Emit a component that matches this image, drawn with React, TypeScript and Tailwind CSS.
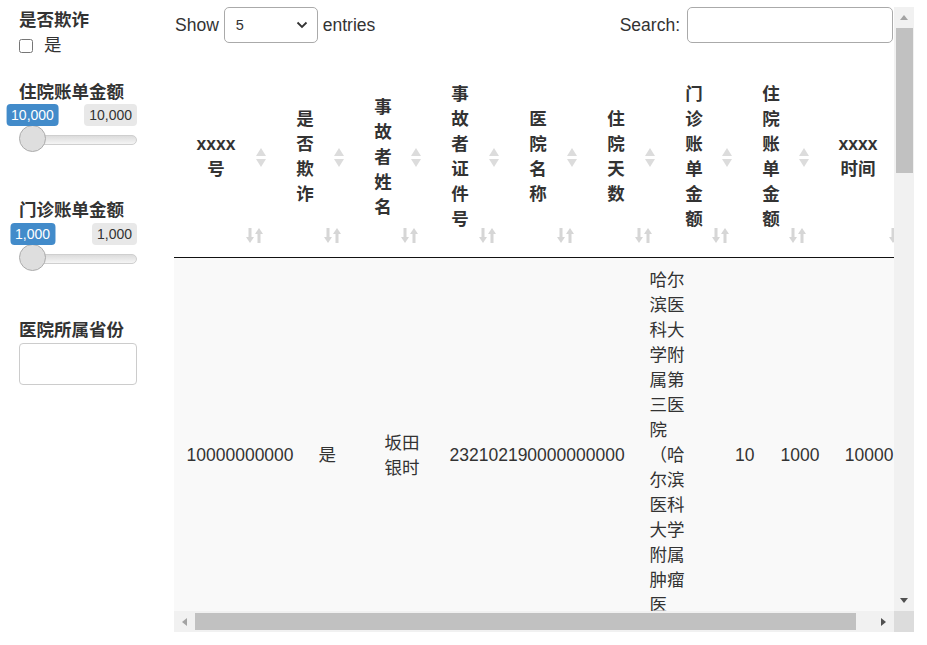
import React from "react";

const headCols = [
  { label: "xxxx号", w: "w-[99px]", tw: "w-[50px]" },
  { label: "是否欺诈", w: "w-[78px]", tw: "w-[30px]" },
  { label: "事故者姓名", w: "w-[77px]", tw: "w-[30px]" },
  { label: "事故者证件号", w: "w-[78px]", tw: "w-[30px]" },
  { label: "医院名称", w: "w-[78px]", tw: "w-[30px]" },
  { label: "住院天数", w: "w-[78px]", tw: "w-[30px]" },
  { label: "门诊账单金额", w: "w-[77px]", tw: "w-[30px]" },
  { label: "住院账单金额", w: "w-[77px]", tw: "w-[30px]" },
  { label: "xxxx时间", w: "w-[100px]", tw: "w-[50px]" },
];

const row = [
  { v: "10000000000", w: "w-[132px]", cls: "whitespace-nowrap" },
  { v: "是", w: "w-[66px]", cls: "" },
  { v: "坂田银时", w: "w-[65px]", cls: "" },
  { v: "232102190000000000", w: "w-[200px]", cls: "whitespace-nowrap" },
  { v: "哈尔滨医科大学附属第三医院（哈尔滨医科大学附属肿瘤医院）", w: "w-[62px]", cls: "" },
  { v: "10", w: "w-[68px]", cls: "text-right whitespace-nowrap" },
  { v: "1000", w: "w-[65px]", cls: "text-right whitespace-nowrap" },
  { v: "10000", w: "w-[74px]", cls: "text-right whitespace-nowrap" },
  { v: "2019-01-01", w: "w-[120px]", cls: "whitespace-nowrap" },
];

function SortBoth() {
  return (
    <svg width="10" height="19" viewBox="0 0 10 19" className="block">
      <polygon points="0,8 5,0 10,8" fill="#dcdcdc" />
      <polygon points="0,11 10,11 5,19" fill="#dcdcdc" />
    </svg>
  );
}

function SortGlyph() {
  return (
    <svg width="17" height="15" viewBox="0 0 17 15" className="block">
      <rect x="2.5" y="0" width="3" height="10" fill="#d6d6d6" />
      <polygon points="0,9 8,9 4,15" fill="#d6d6d6" />
      <polygon points="9,6 17,6 13,0" fill="#d6d6d6" />
      <rect x="11.5" y="5" width="3" height="10" fill="#d6d6d6" />
    </svg>
  );
}

function Slider({ value }: { value: string }) {
  return (
    <div className="relative h-[70px] w-[118px]">
      <div className="absolute left-[1px] right-0 top-[31px] h-[10px] rounded-full border border-[#cfcfcf] bg-gradient-to-b from-[#dcdcdc] to-[#f5f5f5]" />
      <div className="absolute left-0 top-[21px] w-[27px] h-[27px] rounded-full border border-[#ababab] bg-[#dedede]" />
      <div className="absolute left-[13.5px] top-0 -translate-x-1/2 h-[22px] px-[5px] rounded-[4px] bg-[#428bca] text-white text-[14px] leading-[22px] whitespace-nowrap">
        {value}
      </div>
      <div className="absolute right-0 top-0 h-[22px] px-[5px] rounded-[4px] bg-[#e8e8e8] text-[#333] text-[14px] leading-[22px] whitespace-nowrap">
        {value}
      </div>
    </div>
  );
}

function Sidebar() {
  return (
    <aside className="w-[174px] shrink-0 pl-[19px] pt-[8px]">
      <div className="w-[118px]">
        <div className="font-bold">是否欺诈</div>
        <label className="flex items-center h-[25px] gap-[11px]">
          <input type="checkbox" className="m-0 w-[14px] h-[14px]" />
          <span>是</span>
        </label>

        <div className="mt-[22px] font-bold whitespace-nowrap">住院账单金额</div>
        <div className="-mt-[1px]">
          <Slider value="10,000" />
        </div>

        <div className="mt-[24px] font-bold whitespace-nowrap">门诊账单金额</div>
        <Slider value="1,000" />

        <div className="mt-[25px] font-bold whitespace-nowrap">医院所属省份</div>
        <div className="w-[118px] h-[42px] border border-[#ccc] rounded-[4px] bg-white" />
      </div>
    </aside>
  );
}

function Table() {
  return (
    <div className="mt-[7px] flex flex-col">
      <div className="flex">
        <div className="w-[720px] h-[604px] overflow-hidden">
          {/* controls */}
          <div className="flex h-[36px] items-center justify-between">
            <div className="flex items-center">
              <span className="pl-[1px]">Show</span>
              <div className="ml-[5px] w-[94px] h-[36px] border border-[#aaa] rounded-[5px] flex items-center justify-between pl-[11px] pr-[9px] text-[14.5px]">
                <span>5</span>
                <svg width="12" height="8" viewBox="0 0 12 8">
                  <polyline points="1.5,1.5 6,6 10.5,1.5" fill="none" stroke="#333" strokeWidth="1.8" />
                </svg>
              </div>
              <span className="ml-[5px]">entries</span>
            </div>
            <div className="flex items-center">
              <span>Search:</span>
              <div className="ml-[7px] mr-[1px] w-[206px] h-[36px] border border-[#aaa] rounded-[5px]" />
            </div>
          </div>

          {/* header */}
          <div className="mt-[14px] flex w-max h-[201px] border-b border-[#111]">
            {headCols.map((c) => (
              <div key={c.label} className={`relative shrink-0 h-full flex items-center pl-[17px] ${c.w}`}>
                <div className={`${c.tw} text-center font-bold break-all`}>{c.label}</div>
                <div className="absolute right-[7px] top-[91px]">
                  <SortBoth />
                </div>
                <div className="absolute right-[10px] bottom-[14px]">
                  <SortGlyph />
                </div>
              </div>
            ))}
          </div>

          {/* body */}
          <div className="flex w-max items-center bg-[#f9f9f9] [text-spacing-trim:space-all]">
            {row.map((c, i) => (
              <div key={i} className={`shrink-0 px-[12.5px] py-[10px] ${c.w} ${c.cls}`}>
                {c.v}
              </div>
            ))}
          </div>
        </div>

        {/* vertical scrollbar */}
        <div className="w-[20px] h-[604px] bg-[#f1f1f1] flex flex-col">
          <div className="h-[21px] flex items-center justify-center">
            <svg width="8" height="5" viewBox="0 0 8 5">
              <polygon points="0,5 4,0 8,5" fill="#a3a3a3" />
            </svg>
          </div>
          <div className="ml-[2px] mr-[1px] h-[145px] bg-[#c1c1c1]" />
          <div className="flex-1" />
          <div className="h-[21px] flex items-center justify-center">
            <svg width="8" height="5" viewBox="0 0 8 5">
              <polygon points="0,0 8,0 4,5" fill="#505050" />
            </svg>
          </div>
        </div>
      </div>

      {/* horizontal scrollbar */}
      <div className="flex h-[21px]">
        <div className="w-[720px] h-full bg-[#f1f1f1] flex items-center">
          <div className="w-[21px] h-full flex items-center justify-center">
            <svg width="5" height="8" viewBox="0 0 5 8">
              <polygon points="5,0 5,8 0,4" fill="#a3a3a3" />
            </svg>
          </div>
          <div className="w-[661px] h-[17px] bg-[#c1c1c1]" />
          <div className="flex-1" />
          <div className="w-[21px] h-full flex items-center justify-center">
            <svg width="5" height="8" viewBox="0 0 5 8">
              <polygon points="0,0 5,4 0,8" fill="#505050" />
            </svg>
          </div>
        </div>
        <div className="w-[20px] h-full bg-[#dcdcdc]" />
      </div>
    </div>
  );
}

export default function App() {
  return (
    <div className="w-[927px] h-[645px] overflow-hidden bg-white text-[#333] text-[17.5px] leading-[25px] font-['Liberation_Sans','Noto_Sans_CJK_SC',sans-serif] flex">
      <Sidebar />
      <Table />
    </div>
  );
}
